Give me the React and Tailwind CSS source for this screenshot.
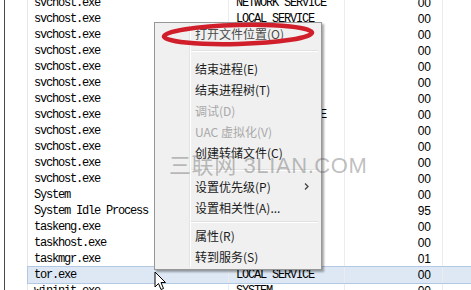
const rows = [
  ["svchost.exe", "NETWORK SERVICE", "00"],
  ["svchost.exe", "LOCAL SERVICE", "00"],
  ["svchost.exe", "SYSTEM", "00"],
  ["svchost.exe", "LOCAL SERVICE", "00"],
  ["svchost.exe", "SYSTEM", "00"],
  ["svchost.exe", "SYSTEM", "00"],
  ["svchost.exe", "LOCAL SERVICE", "00"],
  ["svchost.exe", "NETWORK SERVICE", "00"],
  ["svchost.exe", "SYSTEM", "00"],
  ["svchost.exe", "LOCAL SERVICE", "00"],
  ["svchost.exe", "SYSTEM", "00"],
  ["svchost.exe", "LOCAL SERVICE", "00"],
  ["System", "SYSTEM", "00"],
  ["System Idle Process", "SYSTEM", "95"],
  ["taskeng.exe", "SYSTEM", "00"],
  ["taskhost.exe", "SYSTEM", "00"],
  ["taskmgr.exe", "SYSTEM", "01"],
  ["tor.exe", "LOCAL SERVICE", "00"],
  ["wininit.exe", "SYSTEM", "00"],
]

const menu = [
  { label: "打开文件位置(O)", h: "h-[21px]", tone: "text-[#4a4a4a]" },
  { sep: "h-[14px]" },
  { label: "结束进程(E)", h: "h-[21px]" },
  { label: "结束进程树(T)", h: "h-[21px]" },
  { label: "调试(D)", h: "h-[21px]", disabled: true },
  { label: "UAC 虚拟化(V)", h: "h-[21px]", disabled: true },
  { label: "创建转储文件(C)", h: "h-[22px]" },
  { sep: "h-[12px]" },
  { label: "设置优先级(P)", h: "h-[21px]", sub: true },
  { label: "设置相关性(A)...", h: "h-[21px]" },
  { sep: "h-[7px]" },
  { label: "属性(R)", h: "h-[21px]" },
  { label: "转到服务(S)", h: "h-[22px]" },
]

function ContextMenu() {
  return (
    <div className="absolute left-[154px] top-[22px] w-[168px] h-[248px] border border-[#979797] bg-[#f0f0f0] shadow-[2px_2px_2px_rgba(0,0,0,0.35)]">
      <div className="absolute left-[34px] top-[2px] bottom-[2px] w-px bg-[#e2e3e3]" />
      <div className="absolute left-[35px] top-[2px] bottom-[2px] w-px bg-white" />
      <div className="relative flex flex-col">
        {menu.map((m, i) =>
          m.sep ? (
            <div key={i} className={`${m.sep} flex flex-col justify-center pl-[36px] pr-[3px]`}>
              <div className="h-px bg-[#e0e0e0]" />
              <div className="h-px bg-white" />
            </div>
          ) : (
            <div
              key={i}
              className={`${m.h} flex items-center pl-[40px] pr-[12px] text-[12px] ${
                m.disabled ? "text-[#a8a8a8]" : m.tone || "text-[#1a1a1a]"
              }`}
            >
              <span className="flex-1">{m.label}</span>
              {m.sub && (
                <svg width="5" height="7" viewBox="0 0 5 7">
                  <path d="M1 0.5 L4 3.5 L1 6.5" fill="none" stroke="#444" strokeWidth="1.3" />
                </svg>
              )}
            </div>
          )
        )}
      </div>
    </div>
  )
}

export default function App() {
  return (
    <div
      className="relative w-[471px] h-[290px] bg-white overflow-hidden flex"
      style={{ fontFamily: '"Noto Sans CJK SC", "Noto Sans", sans-serif' }}
    >
      <div className="w-[4px] shrink-0" />
      <div className="w-px shrink-0 bg-[#4a4a4a]" />
      <div className="w-[22px] shrink-0" />
      <div className="flex-1 border-l border-[#e6e6e6] mt-[-5px]">
        {rows.map((r, i) => {
          const sel = i === 17
          return (
            <div
              key={i}
              className={`grid grid-cols-[201px_116px_98px_1fr] h-[16px] items-stretch ${
                sel ? "bg-[#dde8f4] outline outline-1 outline-[#b3c9e3]" : ""
              }`}
            >
              <div
                className="pl-[6px] border-r border-[#ececec] text-[12px] leading-[16px] tracking-[-1.2px] text-black whitespace-nowrap"
                style={{ fontFamily: '"Liberation Mono", monospace' }}
              >
                {r[0]}
              </div>
              <div
                className="pl-[7px] border-r border-[#ececec] text-[12px] leading-[16px] tracking-[-1.2px] text-black whitespace-nowrap"
                style={{ fontFamily: '"Liberation Mono", monospace' }}
              >
                {r[1]}
              </div>
              <div
                className="pr-[11px] border-r border-[#ececec] text-right text-[12px] leading-[16px] text-black"
                style={{ fontFamily: '"Liberation Sans", Arial, sans-serif' }}
              >
                {r[2]}
              </div>
              <div />
            </div>
          )
        })}
      </div>

      <ContextMenu />

      <svg className="absolute left-[159px] top-[19px]" width="160" height="32" viewBox="0 0 160 32">
        <ellipse
          cx="79"
          cy="15.5"
          rx="74"
          ry="9.5"
          fill="none"
          stroke="#d01e2a"
          strokeWidth="4.6"
          transform="rotate(-1.5 79 15.5)"
        />
      </svg>

      <div
        className="absolute left-[169px] top-[155px] text-[22px] leading-[22px] tracking-[0.6px] text-[rgba(90,90,90,0.4)] whitespace-nowrap pointer-events-none"
        style={{ fontFamily: '"Liberation Sans", "Noto Sans CJK SC", sans-serif' }}
      >
        三联网 3LIAN.COM
      </div>

      <svg className="absolute left-[154px] top-[271px]" width="13" height="20" viewBox="0 0 13 20">
        <path
          d="M1 1 L1 16 L4.5 12.5 L7 18.5 L9.5 17.5 L7 11.5 L11.5 11.5 Z"
          fill="white"
          stroke="black"
          strokeWidth="1"
          strokeLinejoin="miter"
        />
      </svg>
    </div>
  )
}
